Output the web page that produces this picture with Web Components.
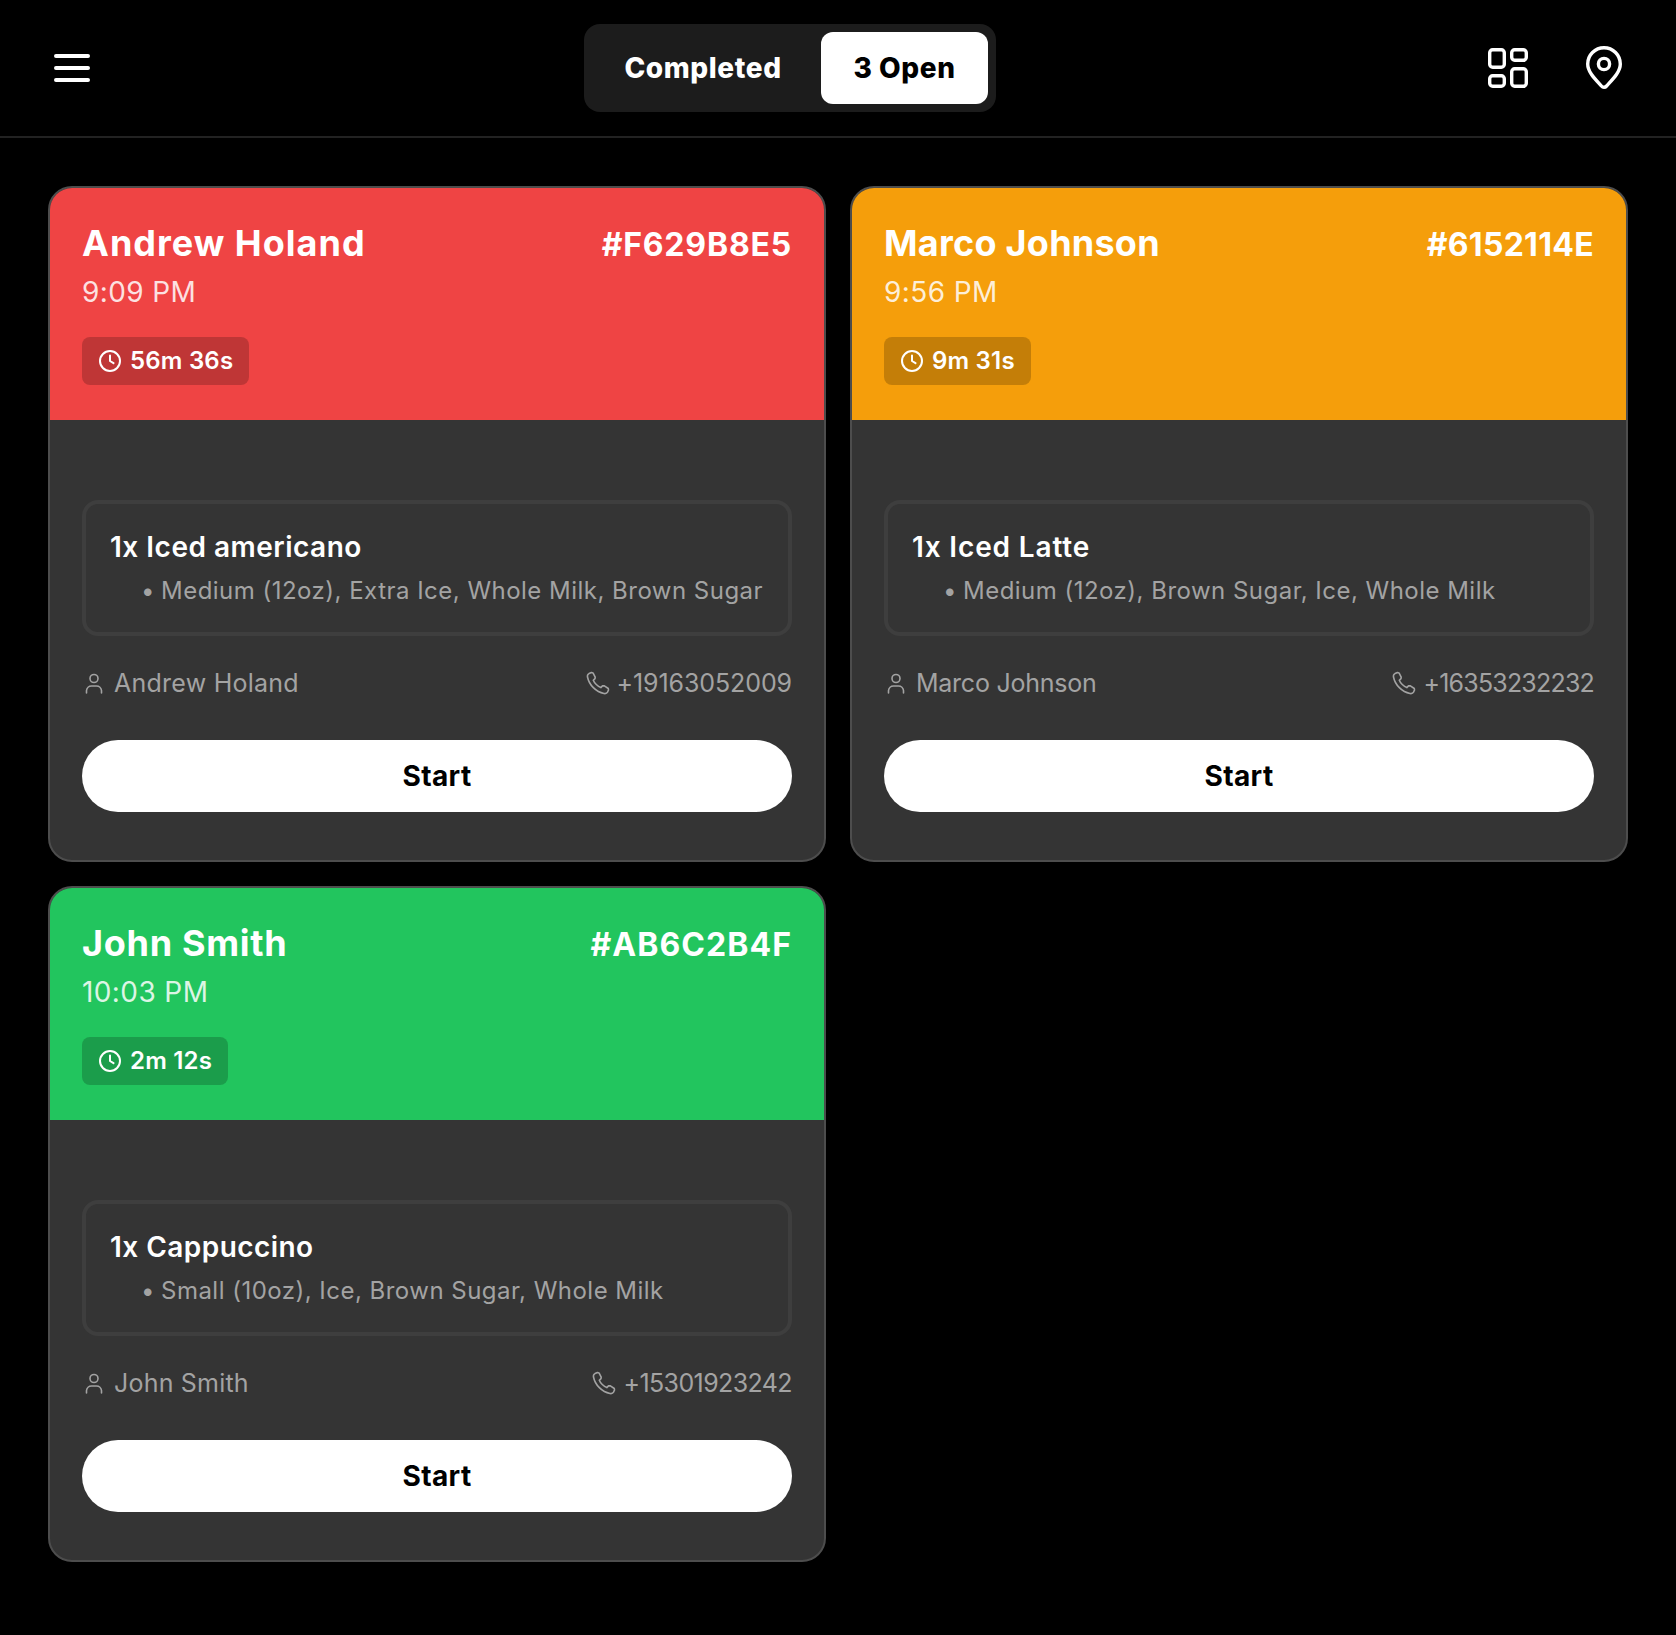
<!doctype html>
<html>
<head>
<meta charset="utf-8">
<title>Orders</title>
<style>
  html, body { margin: 0; background: #000; }
  body { font-family: "Inter", "Liberation Sans", sans-serif; color: #fff; }
</style>
</head>
<body>
<order-screen>
  <top-bar slot="bar"></top-bar>
  <order-card style="--name-ls:1px;--id-ls:.8px;--who-ls:.25px;--phone-ls:-.1px" color="#ef4444" name="Andrew Holand" order-id="#F629B8E5" time="9:09 PM" timer="56m 36s" phone="+19163052009">
    <order-item title="1x Iced americano" detail="Medium (12oz), Extra Ice, Whole Milk, Brown Sugar"></order-item>
  </order-card>
  <order-card style="--name-ls:.25px;--id-ls:.3px;--who-ls:-.25px;--phone-ls:-.8px;--title-ls:.85px" color="#f59e0b" name="Marco Johnson" order-id="#6152114E" time="9:56 PM" timer="9m 31s" phone="+16353232232">
    <order-item title="1x Iced Latte" detail="Medium (12oz), Brown Sugar, Ice, Whole Milk"></order-item>
  </order-card>
  <order-card style="--name-ls:.7px;--id-ls:1.05px;--who-ls:.2px;--phone-ls:-.6px;--title-ls:.45px" color="#22c55e" name="John Smith" order-id="#AB6C2B4F" time="10:03 PM" timer="2m 12s" phone="+15301923242">
    <order-item title="1x Cappuccino" detail="Small (10oz), Ice, Brown Sugar, Whole Milk"></order-item>
  </order-card>
</order-screen>

<script>
  class OrderScreen extends HTMLElement {
    constructor() {
      super();
      this.attachShadow({ mode: "open" });
      this.shadowRoot.innerHTML = `
        <style>
          :host { display: block; min-height: 1635px; background: #000; }
          .grid {
            display: grid;
            grid-template-columns: 1fr 1fr;
            gap: 24px;
            padding: 48px 48px 73px;
          }
        </style>
        <slot name="bar"></slot>
        <div class="grid"><slot></slot></div>
      `;
    }
  }

  class TopBar extends HTMLElement {
    constructor() {
      super();
      this.attachShadow({ mode: "open" });
      this.shadowRoot.innerHTML = `
        <style>
          :host {
            display: flex;
            align-items: center;
            justify-content: space-between;
            height: 136px;
            padding: 0 48px;
            border-bottom: 2px solid #222;
          }
          .icons { display: flex; gap: 48px; }
          svg { display: block; width: 48px; height: 48px; fill: none; stroke: #fff; stroke-width: 4; stroke-linecap: round; stroke-linejoin: round; }
          .toggle {
            display: flex;
            padding: 8px;
            background: #1c1c1c;
            border-radius: 16px;
            font-size: 28px;
            font-weight: 800;
            letter-spacing: .6px;
          }
          .toggle span { display: flex; align-items: center; justify-content: center; box-sizing: border-box; height: 72px; border-radius: 12px; }
          .done { width: 229px; padding-right: 7px; color: #fff; }
          .open { width: 167px; background: #fff; color: #000; }
        </style>
        <svg viewBox="0 0 48 48"><path d="M8 12h32M8 24h32M8 36h32"/></svg>
        <div class="toggle"><span class="done">Completed</span><span class="open">3 Open</span></div>
        <div class="icons">
          <svg viewBox="0 0 48 48" style="stroke-width:3.4">
            <rect x="5.700" y="5.700" width="14.600" height="17.600" rx="3"/>
            <rect x="27.700" y="5.700" width="14.600" height="10.600" rx="3"/>
            <rect x="5.700" y="31.700" width="14.600" height="10.600" rx="3"/>
            <rect x="27.700" y="24.700" width="14.600" height="17.600" rx="3"/>
          </svg>
          <svg viewBox="0 0 48 48" style="stroke-width:3.4">
            <path d="M24 43.300c-1 0-1.900-.500-2.600-1.300C15 35 7.700 28 7.700 20a16.300 16.300 0 0 1 32.600 0c0 8-7.300 15-13.700 22-.700.800-1.600 1.300-2.600 1.300z"/>
            <circle cx="24" cy="20" r="5.600"/>
          </svg>
        </div>
      `;
    }
  }

  class OrderItem extends HTMLElement {
    constructor() {
      super();
      this.attachShadow({ mode: "open" });
      this.shadowRoot.innerHTML = `
        <style>
          :host {
            display: block;
            box-sizing: border-box;
            height: 136px;
            padding: 25px 24px 0;
            border: 4px solid #3e3e3e;
            border-radius: 16px;
          }
          .title { font-size: 28px; line-height: 36px; font-weight: 600; letter-spacing: var(--title-ls, .5px); color: #fff; }
          .detail { display: flex; margin-top: 10px; padding-left: 31px; font-size: 24px; line-height: 32px; letter-spacing: .48px; color: #a3a3a3; white-space: nowrap; }
          .detail i { font-style: normal; width: 20px; flex: none; }
        </style>
        <div class="title"></div>
        <div class="detail"><i>•</i><span></span></div>
      `;
      this.shadowRoot.querySelector(".title").textContent = this.getAttribute("title");
      this.shadowRoot.querySelector(".detail span").textContent = this.getAttribute("detail");
    }
  }

  class OrderCard extends HTMLElement {
    constructor() {
      super();
      this.attachShadow({ mode: "open" });
      const a = (n) => this.getAttribute(n);
      this.shadowRoot.innerHTML = `
        <style>
          :host {
            display: block;
            box-sizing: border-box;
            height: 676px;
            background: #343434;
            border: 2px solid #4d4d4d;
            border-radius: 24px;
            overflow: hidden;
          }
          header { box-sizing: border-box; height: 232px; padding: 35px 32px 0; background: ${a("color")}; }
          .line { display: flex; justify-content: space-between; align-items: center; height: 40px; }
          .name { font-size: 36px; font-weight: 700; letter-spacing: var(--name-ls, 0); }
          .id { margin-top: 2px; font-size: 32px; font-weight: 700; letter-spacing: var(--id-ls, 0); }
          .time { margin-top: 11px; font-size: 28px; line-height: 36px; font-weight: 400; letter-spacing: .4px; color: rgba(255,255,255,.85); }
          .timer {
            display: inline-flex;
            align-items: center;
            gap: 8px;
            height: 48px;
            margin-top: 27px;
            padding: 0 16px;
            border-radius: 8px;
            background: rgba(0,0,0,.2);
            font-size: 24px;
            font-weight: 600;
            letter-spacing: .2px;
          }
          .timer span { margin-top: -2px; }
          .timer svg { width: 24px; height: 24px; stroke: #fff; stroke-width: 2; fill: none; stroke-linecap: round; stroke-linejoin: round; }
          .body { padding: 80px 32px 0; }
          .contact {
            display: flex;
            justify-content: space-between;
            height: 32px;
            margin-top: 31px;
            font-size: 25px;
            line-height: 32px;
            color: #a3a3a3;
            white-space: nowrap;
          }
          .contact div { display: flex; align-items: center; gap: 7px; }
          .contact div:first-child { gap: 8px; }
          .who { letter-spacing: var(--who-ls, 0); }
          .phone { letter-spacing: var(--phone-ls, 0); }
          .contact svg { width: 24px; height: 24px; stroke: #a3a3a3; stroke-width: 1.6; fill: none; stroke-linecap: round; stroke-linejoin: round; }
          button {
            display: block;
            width: 100%;
            height: 72px;
            margin-top: 41px;
            border: 0;
            border-radius: 36px;
            background: #fff;
            color: #000;
            font: 700 28px "Inter", "Liberation Sans", sans-serif;
            letter-spacing: .4px;
          }
        </style>
        <header>
          <div class="line"><span class="name">${a("name")}</span><span class="id">${a("order-id")}</span></div>
          <div class="time">${a("time")}</div>
          <div class="timer">
            <svg viewBox="0 0 24 24"><circle cx="12" cy="12" r="10"/><path d="M12 6.500V12l3.500 2.200"/></svg>
            <span>${a("timer")}</span>
          </div>
        </header>
        <div class="body">
          <slot></slot>
          <div class="contact">
            <div>
              <svg viewBox="0 0 24 24"><circle cx="12" cy="7.500" r="4"/><path d="M4.500 22v-2.500A5 5 0 0 1 9.500 15h5a5 5 0 0 1 5 4.500V22"/></svg>
              <span class="who">${a("name")}</span>
            </div>
            <div>
              <svg viewBox="0 0 24 24"><path d="M5.500 1.500 3 2.600C1.800 3.200 1.200 4.500 1.500 6c1.600 8 8.500 15 16.500 16.500 1.300.200 2.800 0 3.500-1.300l1-2.200-.200-1.500-4.300-2.800-1.500.200-1.700 1.700C11.800 15.500 8.300 12 7.300 9.300L9 7.600l.200-1.500-2.200-4.200-1.500-.400z"/></svg>
              <span class="phone">${a("phone")}</span>
            </div>
          </div>
          <button>Start</button>
        </div>
      `;
    }
  }

  customElements.define("order-screen", OrderScreen);
  customElements.define("top-bar", TopBar);
  customElements.define("order-item", OrderItem);
  customElements.define("order-card", OrderCard);
</script>
</body>
</html>
